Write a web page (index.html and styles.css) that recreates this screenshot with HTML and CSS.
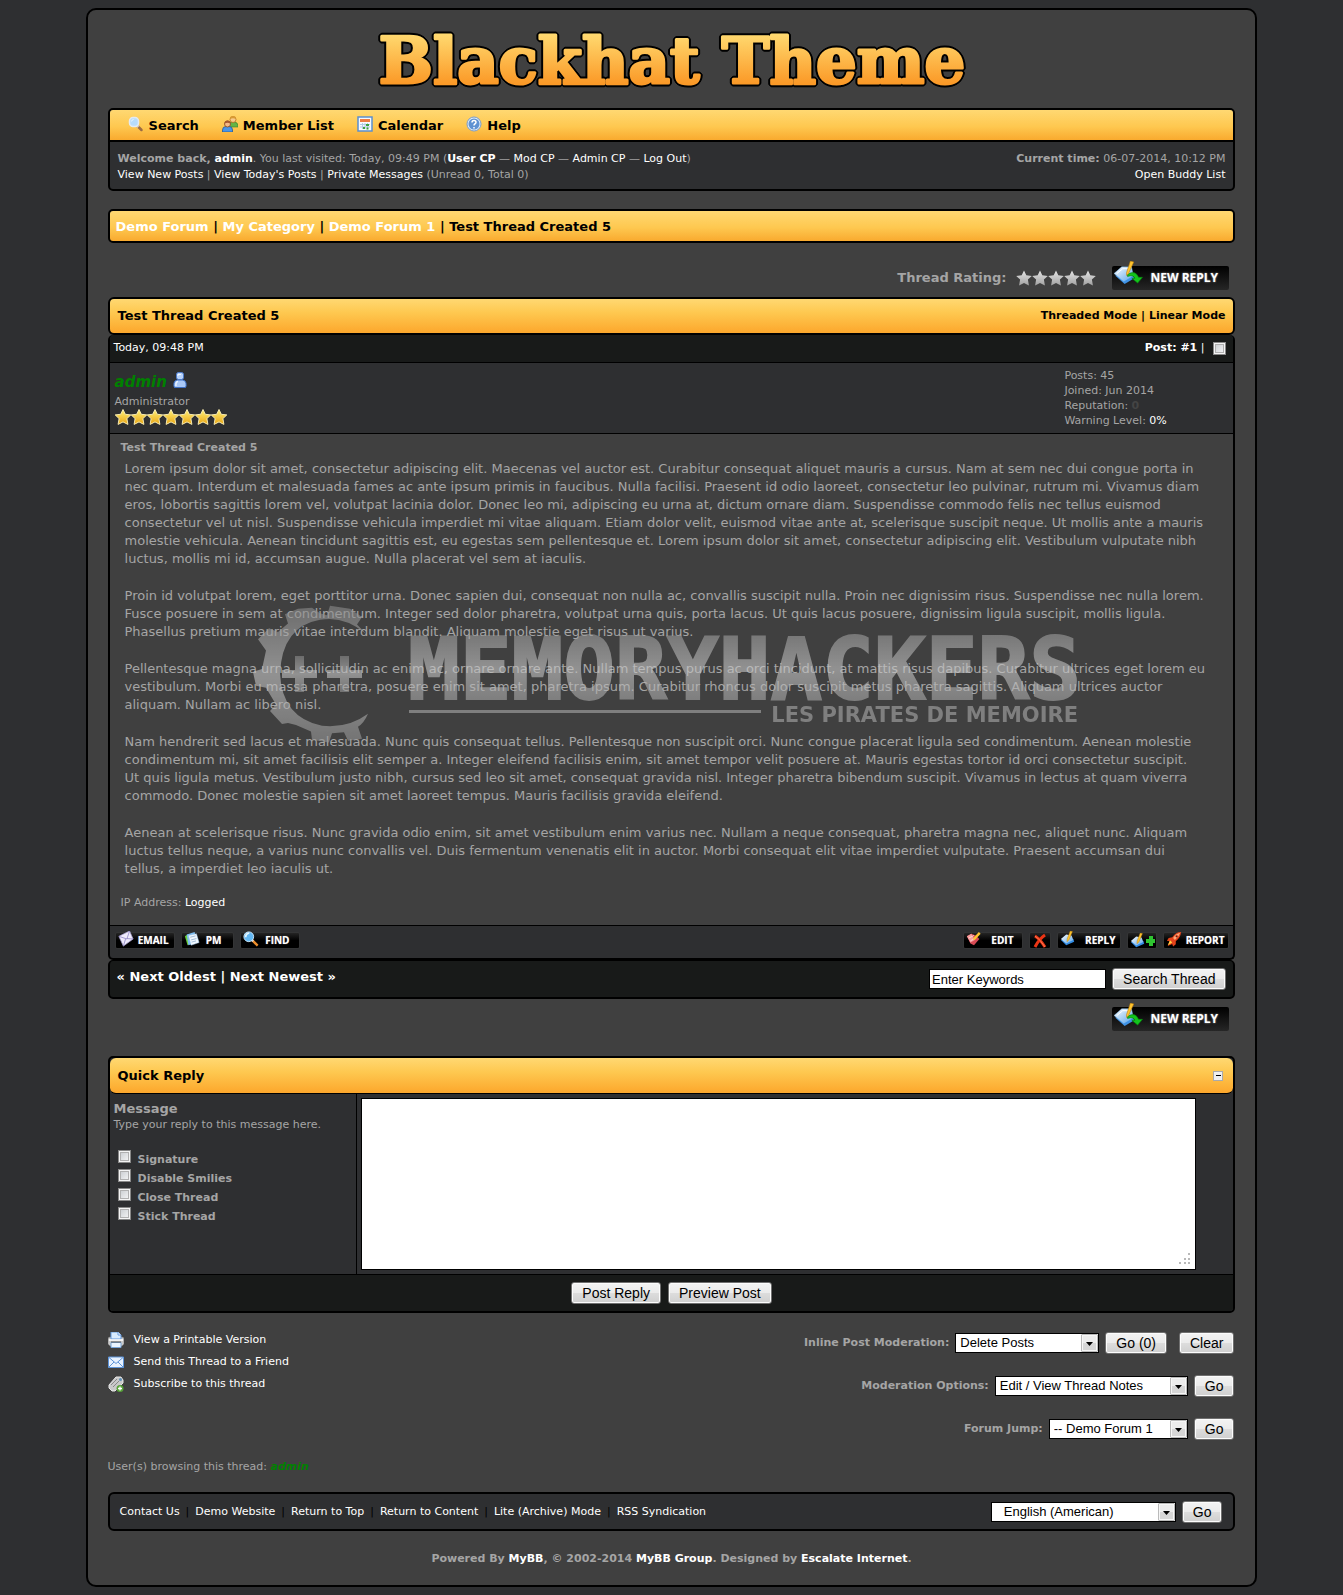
FILE: index.html
```html
<!DOCTYPE html>
<html lang="en">
<head>
<meta charset="utf-8">
<title>Test Thread Created 5</title>
<link rel="stylesheet" href="styles.css">
</head>
<body>
<svg class="sprite" aria-hidden="true">
  <defs>
    <linearGradient id="g-silver" x1="0" y1="0" x2="0" y2="1"><stop offset="0" stop-color="#e4e4e4"/><stop offset="1" stop-color="#a2a2a2"/></linearGradient>
    <linearGradient id="g-gold" x1="0" y1="0" x2="0" y2="1"><stop offset="0" stop-color="#fff27a"/><stop offset="1" stop-color="#e8a413"/></linearGradient>
    <linearGradient id="g-paper" x1="0" y1="0" x2="1" y2="1"><stop offset="0" stop-color="#ffffff"/><stop offset="1" stop-color="#5aa5ea"/></linearGradient>
    <linearGradient id="g-logo" x1="0" y1="0" x2="0" y2="1"><stop offset="0.150" stop-color="#ffd96f"/><stop offset="0.800" stop-color="#fb9a28"/></linearGradient>
    <linearGradient id="g-mark" x1="0" y1="0" x2="0" y2="1"><stop offset="0" stop-color="#8a8a8a"/><stop offset="0.5" stop-color="#c8c8c8"/><stop offset="1" stop-color="#969696"/></linearGradient>
    <symbol id="i-star" viewBox="0 0 16 16"><path d="M8 0.500l2.300 4.800 5.500 0.600-3.900 3.700 1 5.800L8 12.900l-4.900 2.500 1-5.800L0.200 5.900l5.500-0.600z"/></symbol>
    <symbol id="i-search" viewBox="0 0 16 16"><path d="M9 9.500l4.500 4.500" stroke="#9b6b45" stroke-width="2.500" stroke-linecap="round"/><path d="M8.500 9l2 2" stroke="#d7c7b5" stroke-width="3"/><rect x="1.500" y="1.500" width="9" height="9" rx="3.500" fill="#b8dcfb" stroke="#e3eaf2" stroke-width="1.500"/><path d="M3 6q0-3 3.500-3L3 6z" fill="#e5f4ff"/></symbol>
    <symbol id="i-members" viewBox="0 0 16 16"><path d="M6 10q0-4 4-4h2q4 0 4 4v1H6z" fill="#65b445" stroke="#3a7f2a" stroke-width=".6"/><circle cx="11" cy="3.500" r="3" fill="#f7c98a" stroke="#b06e1e" stroke-width=".8"/><path d="M8 3q0-3 3-3t3 3q-3-1.500-6 0z" fill="#d99a32"/><path d="M.5 16v-2q0-3.500 3.500-3.500h3q3.500 0 3.500 3.500v2z" fill="#4a95e6" stroke="#24599c" stroke-width=".8"/><circle cx="5.500" cy="8" r="3" fill="#f3b988" stroke="#874417" stroke-width=".8"/><path d="M2.500 7.500q0-3 3-3t3 3q-3-1.500-6 0z" fill="#a8582c"/></symbol>
    <symbol id="i-calendar" viewBox="0 0 16 16"><rect x="1" y="1" width="14" height="14" fill="#f6faff" stroke="#5b8fce" stroke-width="1.500"/><rect x="3" y="3" width="10" height="3" fill="#ee7e45"/><path d="M3 8.500h10M3 11h10M5.500 7v6M8 7v6M10.500 7v6" stroke="#b3cae6"/><path d="M9 8h3v2H9zM6 11h2v2H6zM9.500 11.500h2v2h-2z" fill="#3da33d"/></symbol>
    <symbol id="i-help" viewBox="0 0 16 16"><circle cx="8" cy="8" r="7" fill="#dcebfa" stroke="#7a9cc9"/><circle cx="8" cy="8" r="5.500" fill="#5f92d2"/><path d="M6 6.500q0-2 2-2t2 1.800q0 1-1.200 1.700-.8.500-.8 1.500M8 11v1.500" fill="none" stroke="#fff" stroke-width="1.500"/></symbol>
    <symbol id="i-buddy" viewBox="0 0 16 16"><path d="M2.500 15.500q-1-1-.5-4.500.5-2.500 3-3h6q2.500.5 3 3 .5 3.500-.5 4.500z" fill="#a9c8f7" stroke="#3d6fc4"/><path d="M4 14q-.6-4 2-4.500" stroke="#e8f2ff" fill="none" stroke-width="1.500"/><rect x="4.500" y=".5" width="7" height="7" rx="2" fill="#b7d2fa" stroke="#4a7acb"/><path d="M6 4V2.500h3" stroke="#f0f7ff" fill="none"/></symbol>
    <symbol id="i-reply" viewBox="0 0 32 26"><path d="M2 15l10 9 10-6-2-4z" fill="#3f93e6"/><path d="M1 13L9 6l10 0 2 9-10 6z" fill="url(#g-paper)" stroke="#8cc4f5" stroke-width=".5"/><path d="M4 13l6-5 6 0" fill="none" stroke="#fff"/><path d="M15 14q8-5 11.500 3h4l-5 6-6-5h3q-1-4-7.500-2z" fill="#13c51c" stroke="#08840e" stroke-width=".7"/><path d="M18 0l3.500 1-5.500 12-2 2v-3z" fill="#ffc52f" stroke="#b77b0c" stroke-width=".6"/></symbol>
    <symbol id="i-page" viewBox="0 0 18 18"><path d="M1 10l6 6 9-4-1-3z" fill="#328ce4"/><path d="M1 9l6-5 6 1 2 5-8 4z" fill="url(#g-paper)"/><path d="M11.500 0l2.500.7L10 10l-2 2v-3z" fill="#ffc52f" stroke="#b77b0c" stroke-width=".5"/></symbol>
    <symbol id="i-mail" viewBox="0 0 18 18"><path d="M1 6L13 0l4 9-11 8z" fill="#eeeafb" stroke="#aaa2d4" stroke-width=".8"/><path d="M1 6l9 3 3-9M6 17l2.500-8M17 9l-7-.500" fill="none" stroke="#8e84c4" stroke-width=".9"/></symbol>
    <symbol id="i-pm" viewBox="0 0 18 18"><path d="M1 6l3-2 2 11-2 1z" fill="#6bcf3a"/><path d="M3 4l9-3 2 12-9 3z" fill="#7dbdf0"/><path d="M5 5l9-2 3 10-9 3z" fill="#f1f8ff" stroke="#9cc7ec" stroke-width=".5"/><path d="M7 7l6-1.500M8 10l6-1.500M8.500 12.500l5-1.300" stroke="#99b6d2"/></symbol>
    <symbol id="i-find" viewBox="0 0 18 18"><path d="M10 10l6.500 6.500" stroke="#ef8f2c" stroke-width="2.600"/><path d="M9.500 9.500l2 2" stroke="#ddd" stroke-width="2.400"/><circle cx="6.500" cy="6.500" r="5.500" fill="#62b7f2" stroke="#d2edff"/><path d="M3 7q0-4 4-4.500" stroke="#e6f7ff" stroke-width="2" fill="none"/></symbol>
    <symbol id="i-edit" viewBox="0 0 18 18"><path d="M1 6l5-3 5 2 4 4-6 7-4-2z" fill="#d84a54"/><path d="M1 6l5-3 4 7-5 3z" fill="#f69c9c"/><path d="M3 8l6-3M5 11l6-3" stroke="#ffd6d2"/><path d="M14.500 1l2 2-6 6.500-2.500.500.500-2.500z" fill="#ffc52f"/></symbol>
    <symbol id="i-delete" viewBox="0 0 16 16"><path d="M3 3q5 3 10 11M13 2Q7 6 3 14" stroke="#ea3414" stroke-width="3" fill="none"/><path d="M3 3q5 3 10 11" stroke="#ff7b54" fill="none"/></symbol>
    <symbol id="i-rocket" viewBox="0 0 18 18"><path d="M17 1q-6 0-10 6l-4 1-2 3 3 .500-2 5.500 5-2.500 1 3 3-2.500 0-3.500Q16.500 7 17 1z" fill="#e4431b"/><path d="M16 2q-5 1-8 6l2 2q5-4 6-8z" fill="#ffa678"/><path d="M2 16l2.500-5.500L7 13z" fill="#ffcf42"/><circle cx="12" cy="6" r="1.300" fill="#7b1a0b"/></symbol>
    <symbol id="i-print" viewBox="0 0 16 16"><path d="M0 7q0-2 2-2h12q2 0 2 2v5l-2 2H2l-2-2z" fill="#c9c9c9" stroke="#777" stroke-width=".6"/><path d="M3 7V0h7l3 3v4z" fill="#d9ecff" stroke="#6299dd"/><path d="M10 0v3h3" fill="#fff" stroke="#6299dd"/><path d="M1 8h14" stroke="#fff" stroke-width="1.500"/><path d="M3 10.500h10v5H3z" fill="#eaf4ff" stroke="#79a6d8"/><path d="M3 10h10" stroke="#555"/></symbol>
    <symbol id="i-send" viewBox="0 0 16 16"><path d="M.5 3h15v10.500H.5z" fill="#e8f2ff" stroke="#5e94d8"/><path d="M1 3.500l7 6 7-6M1 13l5-5M15 13l-5-5" fill="none" stroke="#5e94d8"/></symbol>
    <symbol id="i-subscribe" viewBox="0 0 16 16"><path d="M1 9l7-8 5 0 2 3v3l-8 8H4l-3-3z" fill="#c9c9c9" stroke="#e6e6e6"/><path d="M3 9l6-6M5 11l6-6" stroke="#888"/><circle cx="12.500" cy="3.500" r="1.500" fill="#5f8fb5"/><circle cx="12" cy="12.500" r="3.500" fill="#57a238"/><path d="M10 12.500h4M12 10.500v4" stroke="#fff" stroke-width="1.300"/></symbol>
    <symbol id="i-drop" viewBox="0 0 17 18"><rect x=".5" y=".5" width="16" height="17" fill="#777"/><rect x="1" y="1" width="15" height="16" fill="#f6f6f6"/><rect x="2" y="9" width="13" height="7" fill="#d6d6d6"/><rect x="2" y="2" width="13" height="7" fill="#ececec"/><path d="M5 8h7l-3.500 4z" fill="#000"/></symbol>
    <symbol id="i-grip" viewBox="0 0 12 12"><path d="M9 0h2v2H9zM5 5h2v2H5zM9 5h2v2H9zM0 9h2v2H0zM5 9h2v2H5zM9 9h2v2H9z" fill="#b9b9b9"/></symbol>
  </defs>
</svg>

<div class="page">
  <header>
    <h1 class="logo">
      <svg viewBox="0 0 640 80" width="640" height="80" role="img" aria-label="Blackhat Theme">
        <text class="logo-text" x="320" y="63">Blackhat Theme</text>
      </svg>
    </h1>
    <div class="panel">
      <nav class="menu">
        <a href="#"><svg class="ico"><use href="#i-search"/></svg>Search</a>
        <a href="#"><svg class="ico"><use href="#i-members"/></svg>Member List</a>
        <a href="#"><svg class="ico"><use href="#i-calendar"/></svg>Calendar</a>
        <a href="#"><svg class="ico"><use href="#i-help"/></svg>Help</a>
      </nav>
      <div class="welcome">
        <div><b>Welcome back, <a href="#">admin</a></b>. You last visited: Today, 09:49 PM (<a href="#"><b>User CP</b></a> — <a href="#">Mod CP</a> — <a href="#">Admin CP</a> — <a href="#">Log Out</a>)<br>
        <a href="#">View New Posts</a> | <a href="#">View Today's Posts</a> | <a href="#">Private Messages</a> (Unread 0, Total 0)</div>
        <div class="right"><b>Current time:</b> 06-07-2014, 10:12 PM<br><a href="#">Open Buddy List</a></div>
      </div>
    </div>
  </header>

  <nav class="crumbs"><a href="#">Demo Forum</a> | <a href="#">My Category</a> | <a href="#">Demo Forum 1</a> | <span>Test Thread Created 5</span></nav>

  <div class="thread-tools">
    <span class="rating-label">Thread Rating:</span>
    <span class="stars silver"><svg><use href="#i-star"/></svg><svg><use href="#i-star"/></svg><svg><use href="#i-star"/></svg><svg><use href="#i-star"/></svg><svg><use href="#i-star"/></svg></span>
    <a class="new-reply" href="#"><svg><use href="#i-reply"/></svg>NEW REPLY</a>
  </div>

  <main>
    <div class="thead">
      <h2>Test Thread Created 5</h2>
      <div><a href="#">Threaded Mode</a> | <a href="#">Linear Mode</a></div>
    </div>
    <article class="post">
      <div class="post-date">
        <span>Today, 09:48 PM</span>
        <span class="post-no"><span><b>Post: <a href="#">#1</a></b> |</span><input type="checkbox" class="tick" aria-label="Select post 1"></span>
      </div>
      <div class="author">
        <div>
          <div class="name"><a class="admin" href="#">admin</a><svg class="ico"><use href="#i-buddy"/></svg></div>
          <div class="title">Administrator</div>
          <div class="stars gold"><svg><use href="#i-star"/></svg><svg><use href="#i-star"/></svg><svg><use href="#i-star"/></svg><svg><use href="#i-star"/></svg><svg><use href="#i-star"/></svg><svg><use href="#i-star"/></svg><svg><use href="#i-star"/></svg></div>
        </div>
        <div class="stats">Posts: 45<br>Joined: Jun 2014<br>Reputation: <b class="rep">0</b><br>Warning Level: <a href="#">0%</a></div>
      </div>
      <div class="body">
        <h3>Test Thread Created 5</h3>
        <div class="text">
          <p>Lorem ipsum dolor sit amet, consectetur adipiscing elit. Maecenas vel auctor est. Curabitur consequat aliquet mauris a cursus. Nam at sem nec dui congue porta in<br>nec quam. Interdum et malesuada fames ac ante ipsum primis in faucibus. Nulla facilisi. Praesent id odio laoreet, consectetur leo pulvinar, rutrum mi. Vivamus diam<br>eros, lobortis sagittis lorem vel, volutpat lacinia dolor. Donec leo mi, adipiscing eu urna at, dictum ornare diam. Suspendisse commodo felis nec tellus euismod<br>consectetur vel ut nisl. Suspendisse vehicula imperdiet mi vitae aliquam. Etiam dolor velit, euismod vitae ante at, scelerisque suscipit neque. Ut mollis ante a mauris<br>molestie vehicula. Aenean tincidunt sagittis est, eu egestas sem pellentesque et. Lorem ipsum dolor sit amet, consectetur adipiscing elit. Vestibulum vulputate nibh<br>luctus, mollis mi id, accumsan augue. Nulla placerat vel sem at iaculis.</p>
          <p>Proin id volutpat lorem, eget porttitor urna. Donec sapien dui, consequat non nulla ac, convallis suscipit nulla. Proin nec dignissim risus. Suspendisse nec nulla lorem.<br>Fusce posuere in sem at condimentum. Integer sed dolor pharetra, volutpat urna quis, porta lacus. Ut quis lacus posuere, dignissim ligula suscipit, mollis ligula.<br>Phasellus pretium mauris vitae interdum blandit. Aliquam molestie eget risus ut varius.</p>
          <p>Pellentesque magna urna, sollicitudin ac enim ac, ornare ornare ante. Nullam tempus purus ac orci tincidunt, at mattis risus dapibus. Curabitur ultrices eget lorem eu<br>vestibulum. Morbi eu massa pharetra, posuere enim sit amet, pharetra ipsum. Curabitur rhoncus dolor suscipit metus pharetra sagittis. Aliquam ultrices auctor<br>aliquam. Nullam ac libero nisl.</p>
          <p>Nam hendrerit sed lacus et malesuada. Nunc quis consequat tellus. Pellentesque non suscipit orci. Nunc congue placerat ligula sed condimentum. Aenean molestie<br>condimentum mi, sit amet facilisis elit semper a. Integer eleifend facilisis enim, sit amet tempor velit posuere at. Mauris egestas tortor id orci consectetur suscipit.<br>Ut quis ligula metus. Vestibulum justo nibh, cursus sed leo sit amet, consequat gravida nisl. Integer pharetra bibendum suscipit. Vivamus in lectus at quam viverra<br>commodo. Donec molestie sapien sit amet laoreet tempus. Mauris facilisis gravida eleifend.</p>
          <p>Aenean at scelerisque risus. Nunc gravida odio enim, sit amet vestibulum enim varius nec. Nullam a neque consequat, pharetra magna nec, aliquet nunc. Aliquam<br>luctus tellus neque, a varius nunc convallis vel. Duis fermentum venenatis elit in auctor. Morbi consequat elit vitae imperdiet vulputate. Praesent accumsan dui<br>tellus, a imperdiet leo iaculis ut.</p>
        </div>
        <div class="ip">IP Address: <a href="#">Logged</a></div>
        <svg class="watermark" viewBox="0 0 840 150" aria-hidden="true">
          <g fill="url(#g-mark)">
            <path transform="scale(1 0.93)" d="M114 32Q92 12 68 17Q30 24 28 75Q30 122 70 131Q96 134 116 118Q112 128 106 132L110 145L96 147L92 138L80 139L77 149L60 146L59 137L44 130L36 128L30 129L18 115L24 108L14 90L4 88L1 73L10 70L14 50L6 38L17 26L26 30L36 21L33 11L46 5L60 4L68 10L75 12L78 2L98 5L110 14L105 22Z"/>
            <path d="M43 52h9v14h13v8H52v14h-9V74H30v-8h13zM88 52h9v14h13v8H97v14h-9V74H75v-8h13z"/>
          </g>
          <text class="mark-title" x="156" y="95">MEMORYHACKERS</text>
          <rect x="157" y="106" width="352" height="3" fill="#a9a9a9"/>
          <text class="mark-sub" x="826" y="118">LES PIRATES DE MEMOIRE</text>
        </svg>
      </div>
      <div class="post-bar">
        <div class="badges">
          <a class="badge email" href="#"><svg><use href="#i-mail"/></svg>EMAIL</a>
          <a class="badge pm" href="#"><svg><use href="#i-pm"/></svg>PM</a>
          <a class="badge find" href="#"><svg><use href="#i-find"/></svg>FIND</a>
        </div>
        <div class="badges">
          <a class="badge edit" href="#"><svg><use href="#i-edit"/></svg>EDIT</a>
          <a class="badge delete" href="#" aria-label="Delete"><svg><use href="#i-delete"/></svg></a>
          <a class="badge reply" href="#"><svg><use href="#i-page"/></svg>REPLY</a>
          <a class="badge quote" href="#" aria-label="Multiquote"><svg><use href="#i-page"/></svg><span class="plus"></span></a>
          <a class="badge report" href="#"><svg><use href="#i-rocket"/></svg>REPORT</a>
        </div>
      </div>
    </article>
    <div class="thread-foot">
      <div class="pager">« <a href="#">Next Oldest</a> | <a href="#">Next Newest</a> »</div>
      <form class="row">
        <input class="keywords" type="text" value="Enter Keywords" aria-label="Search this thread">
        <button type="button" class="btn">Search Thread</button>
      </form>
    </div>
    <div class="thread-tools below">
      <a class="new-reply" href="#"><svg><use href="#i-reply"/></svg>NEW REPLY</a>
    </div>

    <form class="quick">
      <div class="thead joined"><h2>Quick Reply</h2><button type="button" class="collapse" aria-label="Collapse"></button></div>
      <div class="quick-main">
        <div class="options">
          <label class="msg-label" for="message">Message</label>
          <p>Type your reply to this message here.</p>
          <label class="opt"><input type="checkbox" class="tick">Signature</label>
          <label class="opt"><input type="checkbox" class="tick">Disable Smilies</label>
          <label class="opt"><input type="checkbox" class="tick">Close Thread</label>
          <label class="opt"><input type="checkbox" class="tick">Stick Thread</label>
        </div>
        <div class="editor">
          <textarea id="message"></textarea>
          <svg><use href="#i-grip"/></svg>
        </div>
      </div>
      <div class="quick-foot">
        <button type="button" class="btn">Post Reply</button>
        <button type="button" class="btn">Preview Post</button>
      </div>
    </form>
  </main>

  <div class="after">
    <ul class="links">
      <li><svg class="ico"><use href="#i-print"/></svg><a href="#">View a Printable Version</a></li>
      <li><svg class="ico"><use href="#i-send"/></svg><a href="#">Send this Thread to a Friend</a></li>
      <li><svg class="ico"><use href="#i-subscribe"/></svg><a href="#">Subscribe to this thread</a></li>
    </ul>
    <div class="moderation">
      <form class="row">
        <label for="inline-mod">Inline Post Moderation:</label>
        <span class="drop w-inline"><select id="inline-mod"><option>Delete Posts</option></select><svg><use href="#i-drop"/></svg></span>
        <button type="button" class="btn">Go (0)</button>
        <button type="button" class="btn clear">Clear</button>
      </form>
      <form class="row">
        <label for="mod-opt">Moderation Options:</label>
        <span class="drop w-options"><select id="mod-opt"><option>Edit / View Thread Notes</option></select><svg><use href="#i-drop"/></svg></span>
        <button type="button" class="btn">Go</button>
      </form>
      <form class="row">
        <label for="jump">Forum Jump:</label>
        <span class="drop w-jump"><select id="jump"><option>-- Demo Forum 1</option></select><svg><use href="#i-drop"/></svg></span>
        <button type="button" class="btn">Go</button>
      </form>
    </div>
  </div>

  <div class="browsing">User(s) browsing this thread: <a class="admin" href="#">admin</a></div>

  <footer>
    <div class="foot-bar">
      <nav><a href="#">Contact Us</a>|<a href="#">Demo Website</a>|<a href="#">Return to Top</a>|<a href="#">Return to Content</a>|<a href="#">Lite (Archive) Mode</a>|<a href="#">RSS Syndication</a></nav>
      <form class="row">
        <span class="drop w-lang"><select aria-label="Language"><option>English (American)</option></select><svg><use href="#i-drop"/></svg></span>
        <button type="button" class="btn">Go</button>
      </form>
    </div>
    <div class="powered">Powered By <a href="#">MyBB</a>, © 2002-2014 <a href="#">MyBB Group</a>. Designed by <a href="#">Escalate Internet</a>.</div>
  </footer>
</div>
</body>
</html>
```
FILE: styles.css
```css
* { box-sizing: border-box; }

body {
  margin: 0;
  padding: 8px;
  background: #2e2f31;
  color: #a5a5a5;
  font: 11px/16px Verdana, "DejaVu Sans", sans-serif;
}

a { color: #fff; text-decoration: none; }
h1, h2, h3, p, ul { margin: 0; padding: 0; }
h2, h3 { font-size: 13px; line-height: 18px; }
svg { display: block; flex: none; }

.sprite { position: absolute; width: 0; height: 0; }
.ico { width: 16px; height: 16px; }

.page {
  box-sizing: content-box;
  width: 85%;
  margin: 0 auto;
  padding: 0 20px;
  border: 2px solid #000;
  border-radius: 10px;
  background: #404040;
}

/* Header */
.logo { display: flex; justify-content: center; height: 98px; padding-top: 10px; }
.logo-text {
  font: bold 64px "DejaVu Serif", serif;
  text-anchor: middle;
  fill: url(#g-logo);
  stroke: url(#g-logo);
  stroke-width: 3px;
  stroke-linejoin: round;
  filter: drop-shadow(1px 1px 0 #000) drop-shadow(-1px -1px 0 #000) drop-shadow(1px -1px 0 #000) drop-shadow(-1px 1px 0 #000);
}

.panel { border: 2px solid #000; border-radius: 5px; background: #2e2f31; overflow: hidden; }
.menu {
  display: flex;
  gap: 23px;
  height: 32px;
  padding: 2px 18px 0;
  border-bottom: 2px solid #000;
  background: linear-gradient(#ffd872, #fec850 55%, #f9aa2f);
}
.menu a { display: flex; align-items: center; gap: 5px; color: #000; font-size: 13px; font-weight: bold; }
.menu .ico { margin-bottom: 4px; }
.welcome { display: flex; justify-content: space-between; padding: 9px 8px 6px; }
.right { text-align: right; }

.crumbs {
  margin-top: 18px;
  padding: 8px 6px 6px;
  border: 2px solid #000;
  border-radius: 5px;
  background: linear-gradient(#ffd872, #fec850 55%, #f9aa2f);
  color: #000;
  font-size: 13px;
  font-weight: bold;
}

/* Rating and reply buttons */
.thread-tools {
  display: flex;
  justify-content: flex-end;
  align-items: center;
  height: 54px;
  padding: 15px 6px 0 0;
}
.thread-tools.below { height: 57px; padding: 0 6px 17px 0; }
.rating-label { margin-right: 10px; font-size: 13px; font-weight: bold; }
.stars { display: flex; }
.stars svg { width: 16px; height: 16px; }
.silver { margin-right: 16px; fill: url(#g-silver); }
.gold { fill: url(#g-gold); stroke: #f5e9b0; stroke-width: 1px; }
.new-reply {
  display: flex;
  align-items: center;
  gap: 6px;
  width: 117px;
  height: 24px;
  padding-left: 1px;
  border-radius: 2px;
  background: linear-gradient(#000, #262626);
  font: bold 12px/24px "Open Sans", sans-serif;
  text-shadow: 0 0 2px #aaa;
}
.new-reply svg { width: 31px; height: 25px; margin-bottom: 8px; }

/* Thread */
.thead {
  display: flex;
  justify-content: space-between;
  align-items: center;
  height: 38px;
  padding: 0 8px;
  border: 2px solid #000;
  border-radius: 6px;
  background: linear-gradient(#ffd872, #fec850 40%, #fca72c);
  color: #000;
  font-weight: bold;
}
.thead a { color: #000; }

.post { border: 2px solid #000; border-top: 0; border-radius: 5px; background: #2e2f31; overflow: hidden; }
.post-date {
  display: flex;
  justify-content: space-between;
  height: 28px;
  padding: 5px 7px 0 4px;
  border-bottom: 1px solid #000;
  background: #181a19;
  color: #fff;
}
.post-no { display: flex; gap: 9px; }
.post-no .tick { margin-top: 2px; }

.tick {
  appearance: none;
  width: 13px;
  height: 13px;
  margin: 0;
  border: 1px solid #888;
  background: linear-gradient(135deg, #c4c8cc, #fafafa);
  box-shadow: inset 0 0 0 1px #f4f4f4, inset 0 0 0 2px #b0b0b0;
}

.author {
  display: flex;
  justify-content: space-between;
  height: 71px;
  padding: 5px;
  border-bottom: 1px solid #000;
}
.name { display: flex; align-items: center; gap: 5px; height: 26px; }
.name .admin { padding-top: 2px; font-size: 15px; }
.name .ico { margin-bottom: 3px; }
.title { line-height: 15px; }
.admin { color: #008000; font-weight: bold; font-style: italic; }
.stats { width: 15%; padding-left: 3px; line-height: 15px; }
.rep { color: #444; }

.body { position: relative; padding: 6px 11px 14px; background: #404040; }
.body h3 { font-size: 11px; line-height: 16px; }
.text { padding: 4px 0 17px 4px; font-size: 13px; line-height: 18px; }
.text p + p { margin-top: 19px; }
.watermark {
  position: absolute;
  top: 170px;
  right: 0;
  left: 0;
  width: 840px;
  height: 150px;
  margin: 0 auto;
  opacity: 0.6;
  pointer-events: none;
}
.mark-title {
  font: bold 86px "DejaVu Sans Mono", monospace;
  fill: url(#g-mark);
  stroke: url(#g-mark);
  stroke-width: 2px;
}
.mark-sub { font: bold 21px "DejaVu Sans", sans-serif; text-anchor: end; fill: #a9a9a9; }

.post-bar { display: flex; justify-content: space-between; padding: 6px 4px 9px 5px; border-top: 1px solid #000; }
.badges { display: flex; gap: 6px; }
.badge {
  display: flex;
  align-items: center;
  justify-content: space-between;
  height: 17px;
  padding: 0 5px 0 2px;
  border: 1px solid #333435;
  border-radius: 2px;
  background: linear-gradient(#242424, #000 50%);
  font: bold 10px/15px "Open Sans", sans-serif;
  text-shadow: 0 0 1px #999;
}
.badge svg { width: 16px; height: 16px; margin-bottom: 4px; }
.email, .edit, .find { width: 60px; }
.edit, .find { padding-right: 9px; }
.pm { width: 53px; padding-right: 11px; }
.delete { width: 22px; padding: 0 2px; }
.delete svg { margin: 0; }
.reply { width: 64px; }
.quote { width: 30px; padding: 0 1px 0 2px; }
.quote svg { margin: 0; }
.report { width: 66px; padding-right: 4px; }
.plus {
  width: 10px;
  height: 10px;
  background: linear-gradient(#2fc431, #2fc431) center / 10px 4px no-repeat, linear-gradient(#2fc431, #2fc431) center / 4px 10px no-repeat;
}

.thread-foot {
  display: flex;
  justify-content: space-between;
  height: 39px;
  padding: 7px 7px 0;
  border: 2px solid #000;
  border-top-width: 1px;
  border-radius: 5px;
  background: #181a19;
  color: #fff;
}
.pager { font-size: 13px; font-weight: bold; line-height: 18px; }

/* Form controls */
.row { display: flex; align-items: center; gap: 6px; height: 22px; }
.row label { font-weight: bold; }
.btn, .keywords, .drop select { font: 13px/18px "Liberation Sans", Arial, sans-serif; color: #000; }
.btn {
  height: 22px;
  padding: 0 10px;
  border: 1px solid #707070;
  border-radius: 3px;
  background: linear-gradient(#f3f3f3, #ebebeb 50%, #dddddd 50%, #cfcfcf);
  box-shadow: inset 0 0 0 1px #fcfcfc;
  font-size: 14px;
}
.clear { margin-left: 6px; }
.keywords { width: 177px; height: 20px; padding: 0 2px; border: 1px solid #000; background: #fff; }
.drop { display: grid; align-items: center; justify-items: end; }
.drop select, .drop svg { grid-area: 1 / 1; }
.drop select {
  appearance: none;
  width: 100%;
  height: 20px;
  padding: 0 20px 0 4px;
  border: 1px solid #000;
  border-radius: 0;
  background: #fff;
}
.drop svg { width: 17px; height: 18px; margin-right: 1px; pointer-events: none; }
.w-inline { width: 144px; }
.w-options { width: 193px; }
.w-jump { width: 139px; }
.w-lang { width: 185px; }
.w-lang select { padding-left: 12px; }

/* Quick reply */
.quick { border: 2px solid #000; border-radius: 5px; background: #2e2f31; overflow: hidden; }
.thead.joined { height: 36px; border-width: 0 0 1px; padding: 0 10px 0 8px; }
.collapse {
  width: 10px;
  height: 10px;
  padding: 0;
  border: 1px solid #aaa;
  background: linear-gradient(#000, #000) center / 5px 1px no-repeat, #eee;
}
.quick-main { display: flex; border-bottom: 1px solid #000; }
.options { flex: none; width: 22%; padding: 6px 4px 0; border-right: 1px solid #000; }
.options p { margin-bottom: 15px; }
.msg-label { display: block; font-size: 13px; font-weight: bold; line-height: 17px; }
.opt { display: flex; gap: 7px; height: 19px; padding: 2px 4px 0; font-weight: bold; line-height: 20px; }
.editor { display: grid; flex: 1; align-items: end; justify-items: end; padding: 4px 37px 4px 4px; }
.editor textarea, .editor svg { grid-area: 1 / 1; }
.editor textarea { width: 100%; height: 172px; border: 1px solid #000; background: #fff; resize: none; }
.editor svg { width: 12px; height: 12px; margin: 5px; }
.quick-foot { display: flex; justify-content: center; gap: 7px; padding: 7px; background: #181a19; }

/* Below the thread */
.after { display: flex; justify-content: space-between; margin-top: 19px; }
.links { list-style: none; }
.links li { display: flex; align-items: center; gap: 10px; height: 22px; padding-bottom: 6px; }
.moderation { display: flex; flex-direction: column; align-items: flex-end; gap: 21px; padding-right: 1px; }
.browsing { margin-top: 19px; padding-bottom: 17px; }

.foot-bar {
  display: flex;
  justify-content: space-between;
  align-items: center;
  height: 39px;
  padding: 0 11px 0 10px;
  border: 2px solid #000;
  border-radius: 6px;
  background: #2e2f31;
  color: #000;
}
.foot-bar nav { display: flex; gap: 6px; }
.powered { padding: 20px 0 18px; font-weight: bold; text-align: center; }
```
